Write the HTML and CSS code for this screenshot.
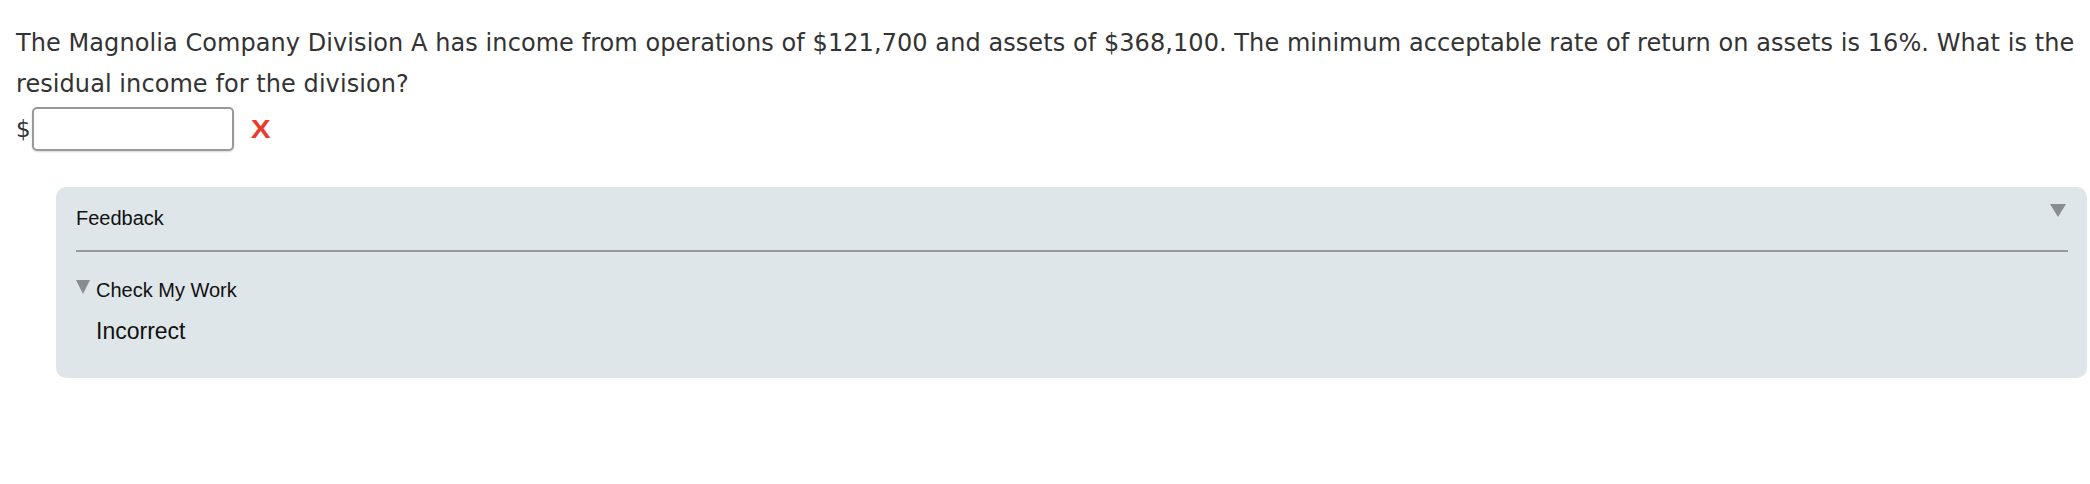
FILE: index.html
```html
<!DOCTYPE html>
<html lang="en">
<head>
<meta charset="UTF-8" />
<title>Residual income</title>
<link rel="stylesheet" href="styles.css">
</head>
<body>

<main class="question">
  <p class="prompt">The Magnolia Company Division A has income from operations of $121,700 and assets of $368,100. The minimum acceptable rate of return on assets is 16%. What is the residual income for the division?</p>

  <div class="answer-row">
    <span class="currency">$</span>
    <input type="text" class="answer-input" />
    <span class="mark-wrong">X</span>
  </div>

  <!-- Feedback panel -->
  <section class="feedback">
    <div class="feedback-head">
      <span>Feedback</span>
      <span class="caret"></span>
    </div>
    <div class="check-work">
      <div class="check-title"><span class="caret small"></span>Check My Work</div>
      <div class="check-result">Incorrect</div>
    </div>
  </section>
</main>

</body>
</html>
```

FILE: styles.css
```css
* {
  box-sizing: border-box;
  margin: 0; padding: 0;
}
body {
  background: #fff;
  color: #333;
  font-family: 'DejaVu Sans', Verdana, sans-serif;
}
.question {
  padding: 23px 0 0 16px;
}
.prompt {
  font-size: 24px;
  line-height: 41px;
  letter-spacing: 0.07px;
}
.answer-row {
  display: flex;
  align-items: center;
  height: 46px;
  margin-top: 1px;
}
.currency {
  font-size: 23px;
  width: 16px;
}
.answer-input {
  width: 202px;
  height: 44px;
  border: 2px solid #999;
  border-radius: 5px;
  background: #fff;
  outline: none;
  box-shadow: 0 1px 2px rgb(0 0 0 / 0.15);
}
.mark-wrong {
  margin-left: 18px;
  color: #ea3b2f;
  font-size: 26px;
  font-weight: 700;
  font-family: 'Liberation Sans', Arial, sans-serif;
  display: inline-block;
  transform: scaleX(1.15);
}

/* Feedback */
.feedback {
  margin: 35px 3px 0 40px;
  height: 191px;
  background: #dfe6e9;
  border-radius: 10px;
  padding: 0 19px 0 20px;
  font-family: 'Liberation Sans', Arial, sans-serif;
  color: #111;
}
.feedback-head {
  display: flex;
  justify-content: space-between;
  align-items: center;
  height: 65px;
  padding-top: 0;
  font-size: 20px;
  border-bottom: 2px solid #999;
}
.caret {
  width: 0; height: 0;
  border-left: 8px solid transparent;
  border-right: 8px solid transparent;
  border-top: 13px solid #8a8d90;
  margin-right: 2px;
  margin-top: -16px;
}
.caret.small {
  display: inline-block;
  border-left-width: 7px;
  border-right-width: 7px;
  border-top-width: 14px;
  margin: 0 6px 0 0;
}
.check-work {
  padding-top: 27px;
}
.check-title {
  display: flex;
  align-items: center;
  font-size: 20px;
  line-height: 22px;
}
.check-title .caret.small {
  align-self: flex-start;
  margin-top: 1px;
}
.check-result {
  font-size: 23px;
  margin: 17px 0 0 20px;
}
```
